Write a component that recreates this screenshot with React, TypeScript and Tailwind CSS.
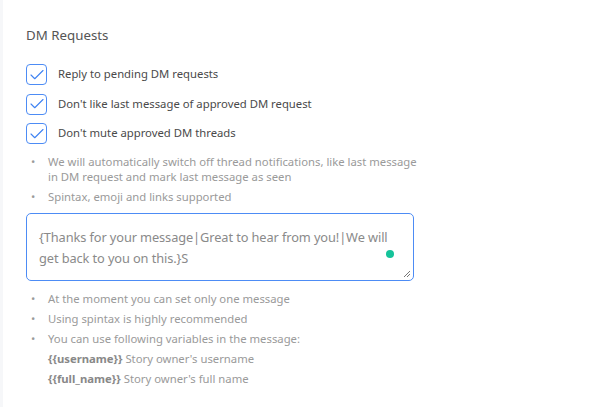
import { Check } from "lucide-react";

const options = [
  "Reply to pending DM requests",
  "Don't like last message of approved DM request",
  "Don't mute approved DM threads",
];

function Box({ label }: { label: string }) {
  return (
    <label className="flex items-center h-[29.5px]">
      <span className="w-[21px] h-[21px] rounded-[4px] border border-[#4d8cf5] flex items-center justify-center shrink-0">
        <Check size={18} strokeWidth={1.5} className="text-[#3f83f2]" />
      </span>
      <span className="ml-[11px] text-[11.3px] text-[#4a4a4a]">{label}</span>
    </label>
  );
}

function Hint({ children }: { children: React.ReactNode }) {
  return (
    <li className="flex text-[11.3px] leading-[15px] text-[#9a9a9a]">
      <span className="w-[20px] shrink-0 pl-[3px]">•</span>
      <span>{children}</span>
    </li>
  );
}

export default function App() {
  return (
    <div className="w-[593px] h-[407px] bg-white flex font-['Noto_Sans',sans-serif]">
      <div className="w-[3px] bg-[#f6f7f9]" />
      <div className="pl-[23px] pt-[26px]">
        <h2 className="text-[13.3px] text-[#555] leading-[18px]">DM Requests</h2>

        <div className="mt-[16px] flex flex-col">
          {options.map((o) => (
            <Box key={o} label={o} />
          ))}
        </div>

        <ul className="mt-[5px] flex flex-col gap-[5px] pl-[2px]">
          <Hint>
            We will automatically switch off thread notifications, like last message
            <br />
            in DM request and mark last message as seen
          </Hint>
          <Hint>Spintax, emoji and links supported</Hint>
        </ul>

        <div className="relative mt-[9px] w-[388px] h-[68px] rounded-[5px] border border-[#4d8cf5]">
          <div className="pl-[12px] pt-[13px] pr-[8px] text-[12.8px] tracking-[-0.1px] leading-[21px] text-[#8a8a8a]">
            {"{Thanks for your message|Great to hear from you!|We will get back to you on this.}S"}
          </div>
          <span className="absolute right-[19px] top-[36px] w-[8px] h-[8px] rounded-full bg-[#15c39a]" />
          <svg className="absolute right-[2px] bottom-[2px]" width="9" height="9" viewBox="0 0 9 9">
            <path d="M8 2 L2 8 M8 5 L5 8" stroke="#777" strokeWidth="1" />
          </svg>
        </div>

        <ul className="mt-[8px] flex flex-col pl-[2px] text-[11.3px] text-[#9a9a9a] leading-[20px]">
          <li className="flex">
            <span className="w-[20px] shrink-0 pl-[3px]">•</span>
            <span>At the moment you can set only one message</span>
          </li>
          <li className="flex">
            <span className="w-[20px] shrink-0 pl-[3px]">•</span>
            <span>Using spintax is highly recommended</span>
          </li>
          <li className="flex">
            <span className="w-[20px] shrink-0 pl-[3px]">•</span>
            <span>
              You can use following variables in the message:
              <br />
              <b className="font-bold text-[#888]">{"{{username}}"}</b> Story owner's username
              <br />
              <b className="font-bold text-[#888]">{"{{full_name}}"}</b> Story owner's full name
            </span>
          </li>
        </ul>
      </div>
    </div>
  );
}
